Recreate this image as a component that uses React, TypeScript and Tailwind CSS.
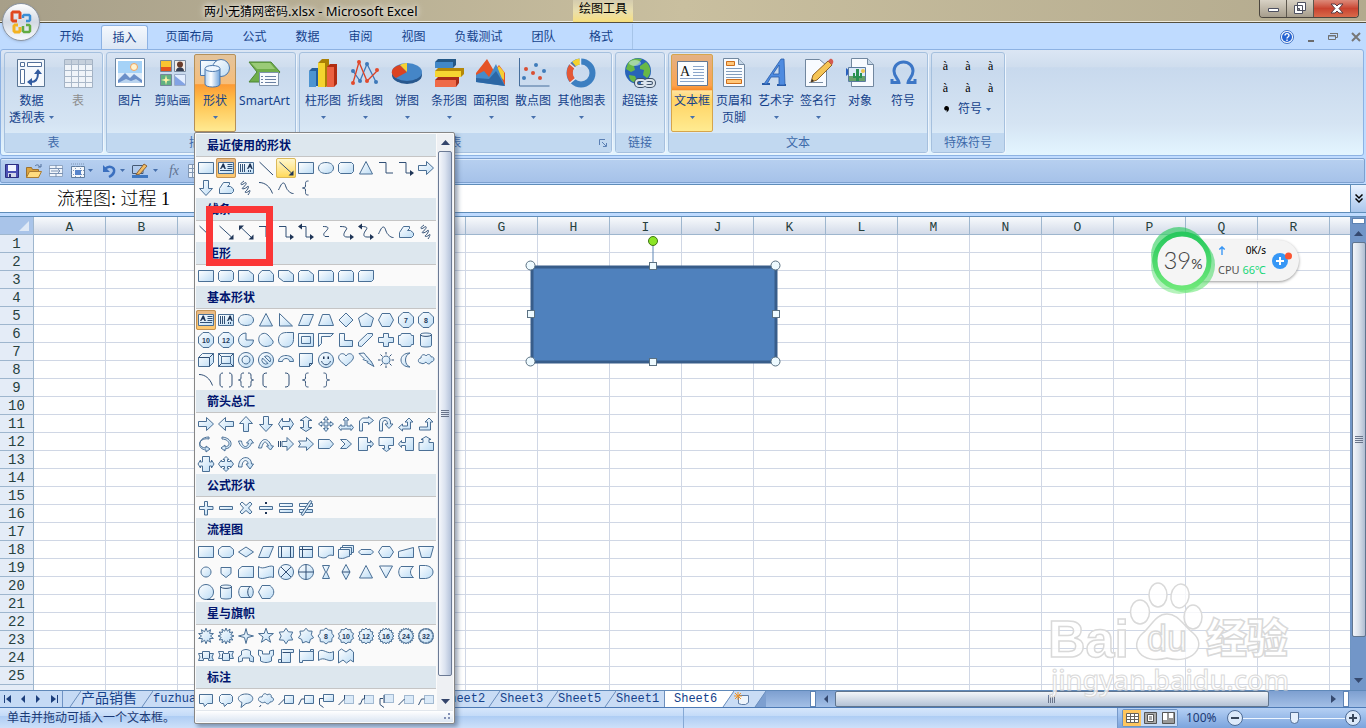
import React from "react";

const UI = "font-['Noto_Sans','Noto_Sans_CJK_SC',sans-serif]";

/* Shape glyphs live on a 20x20 box. Prefixes: "~" open line, "!" solid, ":" dotted, "#" number. */
type Glyph = string[];

const rect = "M2.5 4.5h15v11h-15z";
const rounded = "M4.5 4.5h11l2 2v7l-2 2h-11l-2-2v-7z";
const oval = "M10 4.5c4.8 0 7.5 2.5 7.5 5.5s-2.7 5.5-7.5 5.5-7.5-2.5-7.5-5.5 2.7-5.5 7.5-5.5z";
const disc = "M10 2.5a7.5 7.5 0 1 0 .01 0z";
const textBox = [rect, "~M11.500 6.500h5M11.500 8.500h5M11.500 10.500h5M4 12.500h12", "!M4 11l2.7-5.5h1.2l2 5.5h-1.6l-.4-1.4h-1.9l-.6 1.4z"];
const textBoxV = [rect, "~M4.500 6v8M6.500 6v8M8.500 6v8M12.500 12v2M14.500 12v2", "!M11 11l2.5-5.5h1.2l2 5.5h-1.4l-.4-1.4h-1.9l-.6 1.4z"];
const rightArrow = "M2.5 7.5h8v-4l7 6.5-7 6.5v-4h-8z";
const downArrow = "M7.5 2.5v8h-4l6.5 7 6.5-7h-4v-8z";
const freeform = ["M3.5 15.5v-5l4-6h6v2l-2 2h3l3 2.5v2.5l-2 2z"];
const scribble = ["~M8 3c-5 3-3 5 0 2.500s3 1-.500 3.500 1 2.500 3.500 0 1.500 2-1 4 1 2 3 0 .500 2-1 4"];
const curve = ["~M2.500 12c2-4 3-7 5-7s2 5 4.500 7.500 3.500 3 5.500 3"];
const arc = ["~M3 4.500c6 0 11 4 13.500 11"];
const triangle = "M10 3.500l6.500 12.500h-13z";
const pentagon = "M10 3l7.5 5-2.500 8.500h-10l-2.500-8.500z";
const hexagon = "M6 3.500h8l3.500 6.500-3.500 6.500h-8l-3.500-6.500z";
const octagon = "M7 2.500h6l4.500 4.500v6l-4.500 4.500h-6l-4.500-4.500v-6z";
const can = ["M4.500 4.500c0-2 11-2 11 0v11c0 2-11 2-11 0z", "~M4.500 4.500c0 2.500 11 2.500 11 0"];
const leftBrace = "~M12.500 3c-3 0-3 1-3 3.500s0 3.500-3 3.500c3 0 3 1 3 3.500s0 3.500 3 3.500";
const rightBrace = "~M7.500 3c3 0 3 1 3 3.500s0 3.500 3 3.500c-3 0-3 1-3 3.500s0 3.500-3 3.500";
const bigBrackets = ["~M7 3c-2 0-3 1-3 3v8c0 2 1 3 3 3M13 3c2 0 3 1 3 3v8c0 2-1 3-3 3"];

function starPath(points: number, outer: number, inner: number): string {
  let d = "";
  for (let i = 0; i < points * 2; i++) {
    const r = i % 2 === 0 ? outer : inner;
    const a = (Math.PI * i) / points - Math.PI / 2;
    d += `${i ? "L" : "M"}${(10 + r * Math.cos(a)).toFixed(2)} ${(10 + r * Math.sin(a)).toFixed(2)}`;
  }
  return d + "z";
}

const sections: { title: string; shapes: Glyph[]; active?: number; hover?: number }[] = [
  {
    title: "最近使用的形状",
    active: 1,
    hover: 4,
    shapes: [
      [rect], textBox, textBoxV, ["~M3.500 4l13.500 13"], ["~M3.500 4l12 11", "!M17.500 17.500v-5l-5 5z"], [rect], [oval], [rounded], [triangle],
      ["~M3 4.500h7v10.500h7"], ["~M3 4.500h7v10.500h5", "!M14 12l4 3-4 3z"], [rightArrow],
      [downArrow], freeform, scribble, arc, curve, [leftBrace],
    ],
  },
  {
    title: "线条",
    shapes: [
      ["~M3.500 4l13.500 13"], ["~M3.500 4l12 11", "!M17.500 17.500v-5l-5 5z"], ["~M5 5.500l10 9.500", "!M17.500 17.500v-5l-5 5zM3 3.500v5l5-5z"],
      ["~M3 4.500h7v10.500h7"], ["~M3 4.500h7v10.500h5", "!M14 12l4 3-4 3z"], ["~M5 4.500h5v10.500h5", "!M14 12l4 3-4 3zM6 1.500l-4 3 4 3z"],
      ["~M7 4.500c5 0 6 1 4 3.500s-5 4-2 6.500h4"], ["~M4 4.500c6 0 8 1 6 3.500s-4 7 1 7h4", "!M14 12l4 3-4 3z"], ["~M5 4.500c6 0 7 1 5 3.500s-4 7 1 7h4", "!M14 12l4 3-4 3zM6 1.500l-4 3 4 3z"],
      curve, freeform, scribble,
    ],
  },
  {
    title: "矩形",
    shapes: [
      [rect], [rounded], ["M2.500 4.500h10l5 4v7h-15z"], ["M6 4.500h8l3.500 4v7h-15v-7z"], ["M2.500 4.500h10l5 4v7h-10l-5-4z"],
      ["M4.500 4.500h8l5 4v7h-15v-9z"], ["M2.500 4.500h13l2 2v9h-15z"], ["M4.500 4.500h11l2 2v9h-15v-9z"], ["M4.500 4.500h13v9l-2 2h-13v-9z"],
    ],
  },
  {
    title: "基本形状",
    active: 0,
    shapes: [
      textBox, textBoxV, [oval], [triangle], ["M3.500 3.500l13 12.500h-13z"], ["M7 4.500h10.500l-4.500 11h-10.500z"], ["M6.500 4.500h7l4 11h-15z"],
      ["M10 3l7 7-7 7-7-7z"], [pentagon], [hexagon], [octagon, "#7"], [octagon, "#8"],
      [octagon, "#10"], [octagon, "#12"], ["M10 3a7.500 7 0 1 0 7.500 7h-7.500z"], ["M7 3.500c4-1 6 2.500 10 7.500 1 3-3 5.500-7 5.500-8 0-10-11-3-13z"],
      ["M17.500 2.500v7c0 10-15 10-15 .500 0-5 3-7.500 8-7.500z"], ["M2.500 3.500h15v13h-15z", "M5.500 6.500h9v7h-9z"], ["M2.500 3.500h15l-3 3h-9v7l-3 3z"], ["M3.500 3.500h5v7h8v6h-13z"],
      ["M2.500 16v-4l9-8.500h5v2l-11 11z"], ["M7.500 3.500h5v4h5v5h-5v4h-5v-4h-5v-5h5z"], ["M5.500 3.500h9l1 2h2v9h-2l-1 2h-9l-1-2h-2v-9h2z"], can,
      ["M2.500 7.500l4-4h11v9l-4 4h-11z", "~M2.500 7.500h11v9M13.500 7.500l4-4"], ["M2.500 3.500h15v13h-15z", "M5.500 6.500h9v7h-9z", "~M2.500 3.500l3 3M17.500 16.500l-3-3M17.500 3.500l-3 3M2.500 16.500l3-3"],
      [disc, "M10 6a4 4 0 1 0 .01 0z"], [disc, "M6.500 8a4 4 0 0 0 5.500 5.500zM8.500 6.500a4 4 0 0 1 5.500 5.500z"],
      ["M2.500 11.500c0-8 15-8 15 0h-4c0-4-7-4-7 0z"], ["M3.500 3.500h13v10l-3 3h-10z", "~M16.500 13.500h-3v3"],
      [disc, "!M7 6.500h1.500v2.500h-1.500zM11.500 6.500h1.500v2.500h-1.500z", "~M5.500 11c1.500 5 7.500 5 9 0"], ["M10 6c3-5 9-1 7 3-1 2.500-4 4-7 7-3-3-6-4.500-7-7-2-4 4-8 7-3z"],
      ["M3 3.500l5-.500 3 4 1 .500 2 3 1 .500 3 5.500-7-4 1-1-5-2 1-1z"], ["M10 6a4 4 0 1 0 .01 0z", "~M10 2v2.500M10 15.500v2.500M2 10h2.500M15.500 10h2.500M4.500 4.500l2 2M13.500 13.500l2 2M4.500 15.500l2-2M13.500 6.500l2-2"],
      ["M14 3c-6 2-6 12 0 14-12 0-12-14 0-14z"], ["M5 13c-4 0-3-5 0-5 0-4 4-4 5-2 2-3 5-1 5 1 4-1 4 5 0 5-1 3-4 2-5 0-2 2-4 2-5 1z"],
      arc, bigBrackets, ["~M8 3c-3 0-3 1-3 3.500s0 3.500-2.500 3.500c2.500 0 2.500 1 2.500 3.500s0 3.500 3 3.500M12 3c3 0 3 1 3 3.500s0 3.500 2.500 3.500c-2.500 0-2.500 1-2.500 3.500s0 3.500-3 3.500"],
      ["~M11 3c-3 0-4 1-4 3v8c0 2 1 3 4 3"], ["~M9 3c3 0 4 1 4 3v8c0 2-1 3-4 3"], [leftBrace], [rightBrace],
    ],
  },
  {
    title: "箭头总汇",
    shapes: [
      [rightArrow], ["M17.500 7.500h-8v-4l-7 6.500 7 6.500v-4h8z"], ["M7.500 17.500v-8h-4l6.500-7 6.500 7h-4v8z"], [downArrow],
      ["M2.500 10l4-6v3.500h7v-3.500l4 6-4 6v-3.500h-7v3.500z"], ["M10 2.500l6 4h-3.500v7h3.500l-6 4-6-4h3.500v-7h-3.500z"],
      ["M10 2.500l2.500 3h-1.500v3.500h3.500v-1.500l3 2.500-3 2.500v-1.500h-3.500v3.500h1.500l-2.500 3-2.500-3h1.500v-3.500h-3.500v1.500l-3-2.500 3-2.500v1.500h3.500v-3.500h-1.500z"],
      ["M10 3l3 3h-2v6h4v-1.500l2.500 3-2.500 3v-1.500h-10v1.500l-2.500-3 2.500-3v1.500h4v-6h-2z"],
      ["M3.500 17v-10l3-3h6v-1.500l5 4-5 4v-2h-5l-1 1v7.500z"], ["M3.500 17v-9c0-6 11-6 11 0v2h2.500l-4 4.500-4-4.500h2.500c0-5-5-5-5 0v7z"],
      ["M13 4l4 4h-2.500v7h-8v2l-4-3.500 4-3.500v2h5v-4h-2.500z"], ["M13 4l4 4h-2.500v8h-11v-3h8v-5h-2.500z"],
      ["M13 3c-11 0-12 11-3 11v-2l4 3-4 3v-2c-10-1-8-13 3-11z"], ["M6 3c11 1 12 11 3 12v2l-4-3 4-3v2c7-1 4-8-3-8z"],
      ["M2.500 7c3 10 11 9 13 2h2l-3-4-4 4h2c-1 5-6 5-7-2z"], ["M2.500 14c3-11 9-11 13-2h2l-3 4-4-4h2c-3-6-5-5-7 2z"],
      ["M6 7.500h5v-4l6.500 6.500-6.500 6.500v-4h-5z", "~M2.500 7v6M4.500 7v6"], ["M2.500 7h8v-3.500l7 6.500-7 6.500v-3.500h-8l2-3z"], ["M2.500 5.500h11l4 4.500-4 4.500h-11z"],
      ["M4.500 5.500h6l5 4.500-5 4.500h-6l4.500-4.500z"], ["M2.500 3.500h9v5h3v-2l3 3.500-3 3.500v-2h-3v5h-9z"], ["M3 3.500h14.500v8h-5v3h2l-4 3-4-3h2v-3h-5.500z"],
      ["M17.500 3.500h-8v5h-4v-2l-3 3.500 3 3.500v-2h4v5h8z"], ["M3 8.500h4v-3h-2l5-3 5 3h-2v3h4.500v8h-14.500z"],
      ["M6.500 2.500h7v5.500h2v-2l2.500 4-2.500 4v-2h-2v5.500h-7v-5.500h-2v2l-2.500-4 2.500-4v2h2z"], ["M10 2.500l3 3h-1.500v2h3v-1.500l3 4-3 4v-1.500h-3v2h1.500l-3 3-3-3h1.500v-2h-3v1.500l-3-4 3-4v1.500h3v-2h-1.500z"],
      ["M2.500 13c0-12 13-12 13-3h2l-3.500 5-4-5h2c0-5-6-5-6 3z"],
    ],
  },
  {
    title: "公式形状",
    shapes: [
      ["M8.500 3.500h3v5h5.500v3h-5.500v5.500h-3v-5.500h-5v-3h5z"], ["M3.500 8.500h13v3h-13z"], ["M6 4l4 3.500 4-3.500 2 2-3.500 4 3.500 4-2 2-4-3.500-4 3.500-2-2 3.500-4-3.500-4z"],
      ["M3.500 8.500h13v3h-13z", "!M9 4h2v2h-2zM9 14h2v2h-2z"], ["M3.500 5.500h13v3h-13zM3.500 11.500h13v3h-13z"],
      ["M3.500 5.500h13v3h-13zM3.500 11.500h13v3h-13z", "M14 2.500l2 1-9 14-2-1z"],
    ],
  },
  {
    title: "流程图",
    shapes: [
      [rect], ["M6 4.500h8l3.500 3v5l-3.500 3h-8l-3.500-3v-5z"], ["M10 5l7.500 5-7.500 5-7.500-5z"], ["M7 4.500h10.500l-4.500 11h-10.500z"], [rect, "~M5.500 4.500v11M14.500 4.500v11"], ["M3.500 4.500h13v11h-13z", "~M6.500 4.500v11M3.500 7.500h13"],
      ["M2.500 4.500h15v9c-4-1-5 0-7.500 2-3 1-5 0-7.500-1z"], ["M6.500 3.500h11v7h-11z", "M4.500 5.500h11v7h-11z", "M2.500 7.500h11v7c-4 0-4 3-11 1.500z"], ["M5 7.500h10l2.500 2.500-2.500 2.500h-10l-2.500-2.500z"],
      ["M6 4.500h8l3.500 5.500-3.500 5.500h-8l-3.500-5.500z"], ["M2.500 9.500l15-4v10h-15z"], ["M2.500 4.500h15l-3 11h-9z"],
      ["M10 5a5 5 0 1 0 .01 0z"], ["M5 5.500h10v6l-5 4-5-4z"], ["M6 4.500h11.500v11h-15v-8z"], ["M2.500 4.500c5 4 10-2 15 0v11c-5-2-10 3-15 0z"], [disc, "~M5 5l10 10M15 5l-10 10"], [disc, "~M10 2.500v15M2.500 10h15"],
      ["M6.500 3.500h7l-3 6.500 3 6.500h-7l3-6.500z"], ["M10 2.500l4 7.500-4 7.500-4-7.500z", "~M6 10h8"], [triangle], ["M3.500 4h13l-6.500 12z"], ["M5 4.500h12.500c-4 3-4 8 0 11h-12.500c-3-3-3-8 0-11z"], ["M3.500 3.500h6c10 1 10 12 0 13h-6z"],
      [disc, "~M11 17.500h7v-1"], can, ["M5 4.500h10c3 2 3 9 0 11h-10c-3-2-3-9 0-11z", "~M14 4.500c-3 2-3 9 0 11"], ["M6 3.500h8c5 4 5 9 0 13h-8l-3.500-6.500z"],
    ],
  },
  {
    title: "星与旗帜",
    shapes: [
      [starPath(10, 7.8, 4.5)], [starPath(12, 8, 5)], [starPath(4, 7.5, 2.2)], [starPath(5, 7.8, 3.1)], [starPath(6, 7.8, 4.8)], [starPath(7, 7.8, 5.5)],
      [starPath(8, 8, 6.5), "#8"], [starPath(10, 8, 6.5), "#10"], [starPath(12, 8, 6.4), "#12"], [starPath(16, 8, 6.4), "#16"], [starPath(20, 8, 6.4), "#24"], [starPath(24, 8, 6.4), "#32"],
      ["M2.500 7.500h4v-2h7v2h4l-1.500 3.500 1.500 3.500h-5v-2h-5v2h-5l1.500-3.500z", "~M6.500 7.500v5M13.500 7.500v5"], ["M2.500 5.500h5v2h5v-2h5l-1.500 3.500 1.500 3.500h-4v2h-7v-2h-4l1.500-3.500z", "~M6.500 7.500v5M13.500 7.500v5"],
      ["M5.500 5c3-2 6-2 9 0v4l3 2v5l-4-1v-3h-7v3l-4 1v-5l3-2z"], ["M2.500 4l4 1v3h7v-3l4-1v5l-2 2v4c-4 2-7 2-11 0v-4l-2-2z"],
      ["M6.500 3.500h11v3h-3v10h-12v-3h3v-10z", "~M6.500 6.500h8M5.500 13.500v3"], ["M3.500 3.500v13h3v-2h11v-11h-3v2h-11zM14.500 5.500h3"],
      ["M2.500 5.500c5-4 9 4 15 0v8c-5 4-9-4-15 1z"], ["M2.500 5l3-2 4.500 3 4-3 3.500 3v10l-3-2-4 3-3.500-3-4.500 3z"],
    ],
  },
  {
    title: "标注",
    shapes: [
      ["M3.500 4.500h13v9h-5l-3 3-1-3h-4z"], ["M5.500 4.500h9l2 2v5l-2 2h-3l-3 3-1-3h-2l-2-2v-5z"], ["M10 4c9 0 9 9 0 9.500l-5 4 1-5c-7-3-3-8.500 4-8.500z"], ["M5 12c-4-1-3-6 1-5 1-4 4-4 5-2 3-2 5 0 4 2 4 1 3 5-1 5-1 3-4 2-5 0-2 1-3 1-4 0z", "~M5 15l-1.500 2"],
      ["M8.500 5.500h9v8h-9z", "~M2.500 15l6-6"], ["M8.500 5.500h9v8h-9z", "~M2.500 15l3-6h3"], ["M7.500 4.500h10v7h-10z", "~M7.500 8.500h-4v6l4 3"], [":M8.500 5.500h9v8h-9z", "~M2.500 15l6-6v-4"],
      [":M8.500 5.500h9v8h-9z", "~M2.500 14h2l2-5h2v-4"], [":M8.500 4.500h9v8h-9z", "~M8 5v8M7 8.500h-3v6l4 3"], [":M8.500 5.500h9v8h-9z", "~M2.500 15l6-6"], [":M8.500 5.500h9v8h-9z", "~M2.500 15l3-6h3"],
    ],
  },
];

function ShapeGlyph({ parts }: { parts: Glyph }) {
  return (
    <svg viewBox="0 0 20 20" className="h-5 w-5" aria-hidden="true">
      {parts.map((p, i) => {
        const kind = p[0];
        const d = p.slice(1);
        if (kind === "#")
          return (
            <text key={i} x="10" y="12.500" textAnchor="middle" fontSize="7" fontWeight="700" fill="#1e3a5c" fontFamily="Liberation Sans, sans-serif">
              {d}
            </text>
          );
        if (kind === "~") return <path key={i} d={d} fill="none" stroke="#304f75" />;
        if (kind === "!") return <path key={i} d={d} fill="#1f3557" />;
        if (kind === ":") return <path key={i} d={d} fill="#dbeaf8" stroke="#5b80a8" strokeDasharray="1 1" />;
        return <path key={i} d={p} fill="url(#shapeFill)" stroke="#4a6f95" />;
      })}
    </svg>
  );
}

function Caret({ className = "" }: { className?: string }) {
  return (
    <svg viewBox="0 0 5 3" className={`h-[3px] w-[5px] shrink-0 ${className}`} aria-hidden="true">
      <path d="M0 0h5L2.500 3z" fill="#4670ad" />
    </svg>
  );
}

function ShapeMenu() {
  return (
    <div role="menu" aria-label="形状" className="absolute top-full left-0 z-30 -mt-px flex w-[261px] flex-col rounded-[2px] border border-[#868686] bg-[#fafafa] p-px text-left shadow-[3px_3px_4px_rgba(60,80,110,0.5)]">
      <div className="flex">
        <div className="w-[240px]">
          {sections.map((s) => (
            <section key={s.title}>
              <h3 className="mb-px h-[23px] border-b border-[#c5c5c5] bg-[#dde7ee] pt-px pl-[11px] text-xs leading-[22px] font-bold text-[#00156e]">{s.title}</h3>
              <div className="grid grid-cols-12">
                {s.shapes.map((parts, i) => (
                  <button
                    key={i}
                    aria-label={`${s.title} ${i + 1}`}
                    className={
                      i === s.active
                        ? "h-5 w-5 rounded-[2px] bg-gradient-to-b from-[#e8b987] to-[#ffc96c] outline -outline-offset-1 outline-[#c29254]"
                        : i === s.hover
                          ? "h-5 w-5 rounded-[2px] bg-gradient-to-b from-[#fff8d0] to-[#ffd84e] outline -outline-offset-1 outline-[#dbb95a]"
                          : "h-5 w-5"
                    }
                  >
                    <ShapeGlyph parts={parts} />
                  </button>
                ))}
              </div>
            </section>
          ))}
        </div>
        <div className="ml-px flex w-4 flex-col items-center bg-[#eef0f3]">
          <svg viewBox="0 0 16 17" className="h-[17px] w-4"><path d="M4 11l4.500-5 4.500 5z" fill="#34456b" /></svg>
          <div className="flex w-[14px] flex-1 items-center justify-center rounded-[2px] border border-[#6b7a95] bg-gradient-to-r from-[#f5f7fb] via-[#dbe3f0] to-[#b4c2da]">
            <svg viewBox="0 0 8 8" className="h-2 w-2"><path d="M0 .500h8M0 2.500h8M0 4.500h8M0 6.500h8" stroke="#69748a" /></svg>
          </div>
          <svg viewBox="0 0 16 34" className="h-[34px] w-4"><path d="M4 23h9l-4.500 5z" fill="#34456b" /></svg>
        </div>
      </div>
      <div className="flex h-3 items-end justify-end border-t border-[#e2e7ed] bg-gradient-to-b from-white to-[#dbe5f2] p-[2px]">
        <svg viewBox="0 0 8 8" className="h-2 w-2"><path d="M5 1h2v2h-2zM5 5h2v2h-2zM1 5h2v2h-2z" fill="#8391b5" /></svg>
      </div>
      <div className="pointer-events-none absolute top-[73px] left-[11px] h-[60px] w-[67px] border-[7px] border-[#fb3636]" />
    </div>
  );
}

const icons: Record<string, React.ReactNode> = {
  pivot: (<>
    <path d="M2.500 2.500h27v27h-27z" fill="#f4f8fd" stroke="#5b7695" /><path d="M5.500 5.500h4v4h-4zM12.500 5.500h14v4h-14zM5.500 12.500h4v14h-4z" fill="#fff" stroke="#53709a" />
    <path d="M16 25c5 0 7-4 7-9" fill="none" stroke="#315ba0" strokeWidth="2" /><path d="M23 12l-4 5h8zM12 25l5-4v8z" fill="#315ba0" /></>),
  table: (<>
    <path d="M2.500 2.500h28v28h-28z" fill="#f0f4f9" stroke="#a3b2c4" /><path d="M3 3h27v4H3z" fill="#c6d0dc" /><path d="M2.500 7.500h28M2.500 13.500h28M2.500 19.500h28M2.500 25.500h28M9.500 3v27M16.500 3v27M23.500 3v27" stroke="#aab8c9" /></>),
  picture: (<>
    <path d="M1.500 1.500h29v28h-29z" fill="#fff" stroke="#6d87a3" /><path d="M4 4h24v22H4z" fill="#a5d2f7" /><path d="M4 16h24v10H4z" fill="#dcebfa" /><circle cx="20" cy="10" r="3.500" fill="#fff3cf" stroke="#f1a35e" />
    <path d="M4 23l7-7 5 5 4-4 8 6v3H4z" fill="#6a8fc9" /><path d="M4 26l8-4 5 2 5-2 6 4z" fill="#b9d3ee" /></>),
  clip: (<>
    <path d="M4.500 3.500h11v11h-11z" fill="#f9c331" stroke="#75869b" /><path d="M5 10h10v4H5z" fill="#e2521e" /><path d="M18.500 3.500h11v11h-11z" fill="#f3ece7" stroke="#75869b" /><circle cx="24" cy="7.500" r="3" fill="#6a3c2b" /><path d="M20 14c0-5 8-5 8 0z" fill="#343c51" />
    <path d="M4.500 17.500h11v11h-11z" fill="#62b181" stroke="#75869b" /><path d="M10 18l1 4 4 1-4 1-1 4-1-4-4-1 4-1z" fill="#fff3a5" /><path d="M18.500 17.500h11v11h-11z" fill="#e3eeff" stroke="#9aabc8" /><path d="M19 19l10 8v1H19z" fill="#83a3e4" /></>),
  shapes: (<>
    <path d="M1.500 3.500h18v15h-18z" fill="url(#shapeFill)" stroke="#4b77ab" /><circle cx="22" cy="11" r="8.500" fill="url(#shapeFill)" stroke="#4b77ab" />
    <path d="M6 12v15c0 4 15 4 15 0V12" fill="url(#tube)" stroke="#4b77ab" /><ellipse cx="13.500" cy="11.500" rx="7.500" ry="3" fill="#edf6ff" stroke="#4b77ab" /></>),
  smart: (<>
    <path d="M1 5h22l9 10-9 10H1l8-10z" fill="#6fad4a" stroke="#4d8535" /><path d="M3 6h19l5 6H9z" fill="#9acb77" /><path d="M11.500 15.500h19v13h-19z" fill="#f7fafd" stroke="#7e93ab" /><path d="M17 19.500h11M17 22.500h11M17 25.500h11M13 19.500h2M13 22.500h2M13 25.500h2" stroke="#6980a2" /></>),
  column: (<>
    <path d="M2 14l3-3h7v18H2z" fill="#265f9e" /><path d="M2 14h7v16H2z" fill="#4d94d1" /><path d="M11 6l4-4h7v26l-3 2h-8z" fill="#aa8005" /><path d="M11 6h7v24h-7z" fill="#f4d42e" /><path d="M20 10l3-3h7v20l-3 3h-7z" fill="#b12d12" /><path d="M20 10h7v20h-7z" fill="#ec6141" /></>),
  line: (<>
    <path d="M4 14l7 10 7-17 9 18" fill="none" stroke="#3d78b9" strokeWidth="1.300" /><path d="M4 26L10 5l8 19 11-11" fill="none" stroke="#dc4124" strokeWidth="1.300" />
    <g fill="#3d78b9"><circle cx="4" cy="14" r="2" /><circle cx="11" cy="24" r="2" /><circle cx="18" cy="7" r="2" /><circle cx="27" cy="25" r="2" /></g><g fill="#e24a2c"><circle cx="4" cy="26" r="2" /><circle cx="10" cy="5" r="2" /><circle cx="18" cy="24" r="2" /><circle cx="28" cy="13" r="2" /></g></>),
  pie: (<>
    <ellipse cx="16" cy="18" rx="15" ry="9" fill="#28588e" /><ellipse cx="16" cy="15" rx="15" ry="9" fill="#4586c7" /><path d="M16 15L5 21c-7-4-5-11 4-13z" fill="#db4321" /><path d="M16 15L9 8c2-1 4-2 7-2z" fill="#f5d234" /></>),
  bar: (<>
    <path d="M2 5l3-3h18v6l-3 3H2z" fill="#245887" /><path d="M2 5h18v6H2z" fill="#4288c8" /><path d="M2 14l3-3h26v6l-3 3H2z" fill="#b58808" /><path d="M2 14h26v6H2z" fill="#f5d631" /><path d="M2 23l3-3h21v6l-3 4H2z" fill="#a72d18" /><path d="M2 23h21v7H2z" fill="#ef6a48" /></>),
  area: (<>
    <path d="M1 16L12 2l7 12 5-6 6 8v12L1 20z" fill="#e55326" /><path d="M19 15l5-6 5 6v8z" fill="#f5cf33" /><path d="M1 18l8-4 5 6 7-13 9 22-29-4z" fill="#458bca" /><path d="M1 21l13 1 7-8 9 15-29-4z" fill="#2c67a5" /></>),
  scatter: (<>
    <path d="M2.500 1v28h30" fill="none" stroke="#466e9c" /><g fill="#d94f32"><circle cx="9" cy="12" r="2" /><circle cx="16" cy="16" r="2" /><circle cx="23" cy="21" r="2" /></g><g fill="#3f7cba"><circle cx="7" cy="21" r="2" /><circle cx="19" cy="8" r="2" /><circle cx="27" cy="14" r="2" /></g></>),
  donut: (<>
    <circle cx="16" cy="16" r="11.500" fill="none" stroke="#3c7fc1" strokeWidth="6" /><path d="M8 24A11.500 11.500 0 0 1 8 8" fill="none" stroke="#e45836" strokeWidth="6" /><path d="M9 7a11.500 11.500 0 0 1 6-2.500" fill="none" stroke="#f5d22e" strokeWidth="6" /><path d="M4 6l7 6M15.500 1v9M5 26l6-5" stroke="#dce8f5" strokeWidth="1.500" /></>),
  globe: (<>
    <circle cx="14" cy="14" r="13" fill="#2864b8" /><path d="M4 6c4-5 9-5 14-4l-4 5-4 2 1 4-4 2-5-3zM16 9l6-4c6 5 5 13 1 16l-4-3 1-5-4-1zM5 18l6 1 3 7c-5 0-9-3-9-8z" fill="#68b845" /><ellipse cx="11" cy="6" rx="6" ry="3" fill="#e2f4ff" opacity=".5" />
    <g fill="none" stroke="#3c4f66" strokeWidth="4"><rect x="12" y="23" width="9" height="6" rx="3" /><rect x="21" y="23" width="9" height="6" rx="3" /></g><g fill="none" stroke="#dce5ed" strokeWidth="2"><rect x="12" y="23" width="9" height="6" rx="3" /><rect x="21" y="23" width="9" height="6" rx="3" /><path d="M17 26h9" /></g></>),
  textbox: (<>
    <path d="M1.500 4.500h30v24h-30z" fill="#fbfdff" stroke="#647892" /><path d="M17 9.500h11M17 12.500h11M17 15.500h11M17 18.500h11M4 21.500h24M4 24.500h24" stroke="#8aa5ca" /><text x="4" y="18.500" fontFamily="Liberation Serif, serif" fontSize="14" fill="#111">A</text></>),
  header: (<>
    <path d="M5.500 1.500h15l6 6v22h-21z" fill="#f8fbff" stroke="#71879f" /><path d="M20.500 1.500v6h6" fill="#c5d5e6" stroke="#71879f" /><path d="M8.500 4.500h8v4h-8zM8.500 22.500h15v4h-15z" fill="#ffc679" stroke="#cd6d1a" /><path d="M8 11.500h16M8 14.500h16M8 17.500h16M8 20.500h16" stroke="#829cbb" /></>),
  wordart: (<>
    <path d="M2 27h8M17 28h9" stroke="#285ca8" strokeWidth="2" /><path d="M4 27L21 2h3l1 26h-6l0-8h-8l-4 7zM13 17h6V8z" fill="#4e8be0" stroke="#285ca8" strokeWidth=".8" /></>),
  sign: (<>
    <path d="M3.500 2.500h14l7 6v21h-21z" fill="#f8fbff" stroke="#71879f" /><path d="M7 25.500h14" stroke="#7a8da3" /><path d="M11 18L26 4l4 4-15 15-6 2z" fill="#f5c454" stroke="#8d6227" /><path d="M26 4l2-2c2-1 4 2 3 4l-1 2z" fill="#d55a4f" /><path d="M9 25l1-3 2 2z" fill="#302d2d" /></>),
  object: (<>
    <path d="M7.500 1.500h16l6 6v22h-22z" fill="#f7faff" stroke="#71879f" /><path d="M23.500 1.500v6h6" fill="#c5d5e6" stroke="#71879f" /><path d="M2 11l5 4-5 4z" fill="#285fbd" /><path d="M4.500 10.500h17v14h-17z" fill="#dceafa" stroke="#5b7b9f" /><path d="M5 19h16v5H5z" fill="#68a06b" /><path d="M12 12h3v12h-3zM9 16h2v3h5v-3h2v5H9z" fill="#279052" /><circle cx="19" cy="14" r="2" fill="#eec44b" /></>),
  omega: (
    <path d="M5 22v3.500h7c0-3-5-5-5-11.500 0-5 4-9 9.500-9s9.500 4 9.500 9c0 6.500-5 8.500-5 11.500h7v-3.500" fill="none" stroke="#3c76c6" strokeWidth="3" />),
};

function BigButton({ icon, label, second, caret, wide, state, muted }: { icon: string; label: string; second?: string; caret?: boolean; wide?: string; state?: "open" | "on"; muted?: boolean }) {
  const look =
    state === "open"
      ? "rounded-[2px] border-[#b49059] bg-[linear-gradient(#e3c49c_0%,#f7bd79_38%,#fc9b35_39%,#ffc04b_60%,#ffea92_100%)]"
      : state === "on"
        ? "rounded-[2px] border-[#d6a54c] bg-[linear-gradient(#e3b185_0%,#fda34d_40%,#f98a26_46%,#ffe3a0_47%,#ffd465_60%,#ffeb91_100%)]"
        : "border-transparent";
  return (
    <button className={`flex h-[78px] flex-col items-center border text-xs leading-[17px] whitespace-nowrap ${wide ?? "w-[42px]"} ${look} ${muted ? "text-[#8d8d8d]" : "text-[#15428b]"}`}>
      <svg viewBox="0 0 33 33" className="mt-[2px] mb-[2px] h-[33px] w-[33px] shrink-0" aria-hidden="true">{icons[icon]}</svg>
      <span>{label}</span>
      {second ? <span className="flex items-center gap-1">{second}{caret && <Caret />}</span> : caret && <Caret className="mt-[7px]" />}
    </button>
  );
}

function Group({ title, children, launcher }: { title: string; children: React.ReactNode; launcher?: boolean }) {
  return (
    <div className="flex flex-col rounded-[3px] border border-[#a5c0de] shadow-[1px_1px_0_#eef5fd]">
      <div className="flex h-[80px] px-[2px] pt-px">{children}</div>
      <div className="flex h-[19px] items-center rounded-b-[2px] bg-[#c1d8f0] text-xs text-[#3e6aaa]">
        <span className="flex-1 text-center">{title}</span>
        {launcher && (
          <button aria-label="图表对话框" className="mr-1 h-[9px] w-2">
            <svg viewBox="0 0 8 8" className="h-2 w-2"><path d="M.500 6V.500H6M3 3l4 4M7.500 4v3.500H4" fill="none" stroke="#5b80b4" /></svg>
          </button>
        )}
      </div>
    </div>
  );
}

function TitleBar() {
  return (
    <header className="relative flex h-[23px] shrink-0 justify-between border-b border-[#55503f] bg-gradient-to-r from-[#a79f89] via-[#c9bf9f] to-[#b3aa8e] text-black shadow-[inset_0_-1px_0_#efeada]">
      <div className="flex">
        <h1 className="ml-[204px] w-[369px] pt-[3px] text-xs leading-[17px] whitespace-pre [text-shadow:0_0_5px_#fff,0_0_8px_#fff]">两小无猜网密码<span className="text-[13px]">.xlsx - Microsoft Excel</span></h1>
        <div className="h-[22px] w-[60px] bg-gradient-to-b from-[#d4cbae] via-[#e9dfae] to-[#f7df7c] text-center text-xs leading-[17px]">绘图工具</div>
      </div>
      <div className="mr-[7px] flex h-[18px] overflow-hidden rounded-b-[4px] border border-t-0 border-[#4b463e]">
        <button aria-label="最小化" className="w-[27px] border-r border-[#5c574d] bg-gradient-to-b from-[#d8d2c5] to-[#a69d8c]"><svg viewBox="0 0 26 17"><path d="M8.500 8.500h10v3h-10z" fill="#fff" stroke="#4d5060" /></svg></button>
        <button aria-label="还原" className="w-[27px] border-r border-[#5c574d] bg-gradient-to-b from-[#d8d2c5] to-[#a69d8c]"><svg viewBox="0 0 26 17"><path d="M10.500 2.500h8v8h-8zM7.500 5.500h8v8h-8z" fill="#fff" stroke="#4d5060" /><path d="M10.500 8.500h2v2h-2z" fill="#888" stroke="#4d5060" /></svg></button>
        <button aria-label="关闭" className="w-[44px] bg-gradient-to-b from-[#dc8a7a] via-[#c94330] to-[#d9694a]"><svg viewBox="0 0 44 17"><path d="M17 4h4l2 2 2-2h4l-4 4.500 4 4.500h-4l-2-2-2 2h-4l4-4.500z" fill="#fff" stroke="#573b43" /></svg></button>
      </div>
    </header>
  );
}

function RibbonTabs() {
  const tabs = ["开始", "插入", "页面布局", "公式", "数据", "审阅", "视图", "负载测试", "团队", "格式"];
  return (
    <nav className="flex h-[26px] shrink-0 items-end bg-[#bfdbff] pl-[45px] text-xs text-[#15428b]">
      {tabs.map((t) => (
        <button
          key={t}
          className={
            t === "插入"
              ? "mx-[3px] -mb-px h-[25px] w-[47px] rounded-t-[3px] border border-b-0 border-[#8db2e3] bg-gradient-to-b from-[#f4f8fd] to-[#dbe6f4]"
              : t.length === 4
                ? "h-[25px] w-[77px]"
                : t === "格式"
                  ? "h-[25px] w-[63px] border-r border-[#a6c4e8]"
                  : "h-[25px] w-[53px]"
          }
        >
          {t}
        </button>
      ))}
      <div className="ml-auto flex h-[25px] items-center gap-[13px] pr-[5px]">
        <button aria-label="帮助"><svg viewBox="0 0 14 14" className="h-[14px] w-[14px]"><circle cx="7" cy="7" r="6.500" fill="#fff" stroke="#3d70c5" /><circle cx="7" cy="7" r="5" fill="#2563d2" /><path d="M5 5.500c0-2.500 4-2.500 4 0 0 1.500-2 1.500-2 3M7 9.500v1.500" fill="none" stroke="#fff" strokeWidth="1.400" /></svg></button>
        <button aria-label="最小化工作簿"><svg viewBox="0 0 8 10" className="h-[10px] w-2"><path d="M1 8h6v2H1z" fill="#6c6c6c" /></svg></button>
        <button aria-label="还原工作簿"><svg viewBox="0 0 10 10" className="h-[10px] w-[10px]"><path d="M2.500 1.500h7v4h-2M.500 3.500h7v4h-7zM2 1.500h8M0 4h8" fill="none" stroke="#717171" /></svg></button>
        <button aria-label="关闭工作簿"><svg viewBox="0 0 10 10" className="h-[10px] w-[10px]"><path d="M1 1l8 8M9 1L1 9" stroke="#777" strokeWidth="2" /></svg></button>
      </div>
    </nav>
  );
}

function OfficeButton() {
  return (
    <button aria-label="Office 按钮" className="absolute top-[3px] left-[2px] z-20 h-[38px] w-[38px] rounded-full border border-[#8b95a3] bg-gradient-to-b from-white via-[#d3d9e3] to-[#f8fafd] shadow">
      <svg viewBox="0 0 36 36" className="h-9 w-9">
        <g fill="none" strokeWidth="3">
          <path d="M17 15v-6l-1-1h-6l-1 1v7l1 1h4" stroke="#e0481f" />
          <path d="M20 14v-2l1-1h5l1 1v4l-1 1h-3" stroke="#3a8ed5" strokeWidth="2.500" />
          <path d="M17 23v4l-1 1h-4l-1-1v-5l1-1h3" stroke="#f4b321" />
          <path d="M20 22v5l1 1h5l1-1v-5l-1-1h-3" stroke="#62ac42" strokeWidth="2.500" />
        </g>
      </svg>
    </button>
  );
}

function Ribbon() {
  const marks = ["à", "à", "à", "à", "à", "à"];
  return (
    <div className="mr-[2px] mb-[2px] flex shrink-0 gap-[3px] rounded-[3px] border border-[#8db2e3] bg-[linear-gradient(#dbe6f4_0%,#cfddee_16%,#c8d9ed_17%,#d5e4f3_70%,#e3f5ff_100%)] py-[2px] pl-[3px]">
      <Group title="表">
        <BigButton icon="pivot" label="数据" second="透视表" caret wide="w-[49px]" />
        <BigButton icon="table" label="表" muted wide="w-[44px]" />
      </Group>
      <Group title="插图">
        <BigButton icon="picture" label="图片" />
        <BigButton icon="clip" label="剪贴画" wide="w-[43px]" />
        <div className="relative">
          <BigButton icon="shapes" label="形状" caret state="open" />
          <ShapeMenu />
        </div>
        <BigButton icon="smart" label="SmartArt" wide="w-[57px]" />
      </Group>
      <Group title="图表" launcher>
        <BigButton icon="column" label="柱形图" caret />
        <BigButton icon="line" label="折线图" caret />
        <BigButton icon="pie" label="饼图" caret />
        <BigButton icon="bar" label="条形图" caret />
        <BigButton icon="area" label="面积图" caret />
        <BigButton icon="scatter" label="散点图" caret />
        <BigButton icon="donut" label="其他图表" caret wide="w-[55px]" />
      </Group>
      <Group title="链接">
        <BigButton icon="globe" label="超链接" wide="w-[44px]" />
      </Group>
      <Group title="文本">
        <BigButton icon="textbox" label="文本框" caret state="on" />
        <BigButton icon="header" label="页眉和" second="页脚" />
        <BigButton icon="wordart" label="艺术字" caret />
        <BigButton icon="sign" label="签名行" caret />
        <BigButton icon="object" label="对象" />
        <BigButton icon="omega" label="符号" wide="w-[44px]" />
      </Group>
      <Group title="特殊符号">
        <div className="w-[68px] pt-px">
          <div className="grid grid-cols-3 font-['Liberation_Serif',serif] text-xs text-black">
            {marks.map((m, i) => (
              <button key={i} className="h-[22px]">{m}</button>
            ))}
          </div>
          <button className="flex h-5 w-full items-center gap-1 pl-[8px] text-xs text-[#15428b]">
            <svg viewBox="0 0 9 10" className="mr-[3px] h-[10px] w-[9px]"><path d="M4 2a2.500 2.500 0 0 1 3 2.500c0 2-1 3-3 4 1-1 1-1.500 1-2-3 .500-4-3-1-4.500z" fill="#000" /></svg>符号<Caret />
          </button>
        </div>
      </Group>
    </div>
  );
}

function QuickAccess() {
  const box = "h-4 w-4";
  return (
    <div className="mr-px flex h-[25px] shrink-0 items-center rounded-[2px] border border-[#7ea1cf] bg-gradient-to-b from-[#b7d0f0] to-[#a6c2e9] pl-[3px] shadow-[inset_0_1px_0_#dceafb]">
      <button aria-label="保存" className="mr-[6px]"><svg viewBox="0 0 16 16" className={box}><path d="M1.500 1.500h13v13h-13z" fill="#4b50b5" stroke="#2b2f80" /><path d="M4 2h8v6H4z" fill="#f1f5ff" /><path d="M4 10h8v4H4z" fill="#d3d7e9" /><path d="M5 11h2v3H5z" fill="#31367c" /></svg></button>
      <button aria-label="打开" className="mr-[6px]"><svg viewBox="0 0 16 16" className={box}><path d="M.500 14.500v-10h5l1 2h6v8z" fill="#dda43e" stroke="#9b7130" /><path d="M.500 14.500l3-6h12l-3 6z" fill="#ffdc80" stroke="#ab7d33" /><path d="M9 3c2-2 4-1 5 1m1-3v3h-3" fill="none" stroke="#53709b" /></svg></button>
      <button aria-label="合并后居中" className="mr-[6px]"><svg viewBox="0 0 16 16" className={box}><path d="M1.500 2.500h13v11h-13z" fill="#eff4fb" stroke="#91a6c2" /><path d="M1 5.500h14M1 10.500h14M8 2v3M8 11v3M3 8h9M10 6l2 2-2 2" fill="none" stroke="#7b92b3" /></svg></button>
      <button aria-label="选择对象" className="mr-2 flex items-center gap-[2px]"><svg viewBox="0 0 16 16" className={box}><path d="M1.500 3.500h13v11h-13z" fill="#f4f7fb" stroke="#5f7c9f" /><path d="M1 7.500h14M1 11.500h14M5.500 3v11M10.500 3v11M1 1h14" stroke="#7c94b2" strokeDasharray="1 1" /><path d="M5 7h6v5H5z" fill="#5684cb" /></svg><Caret /></button>
      <button aria-label="撤消" className="mr-[7px] flex items-center gap-[3px]"><svg viewBox="0 0 16 16" className={box}><path d="M4 6c4-4 10-2 9 3-1 3-3 4-5 5" fill="none" stroke="#3b70bf" strokeWidth="2.500" /><path d="M2 2v7h7z" fill="#3b70bf" /></svg><Caret /></button>
      <button aria-label="形状轮廓" className="mr-2 flex items-center gap-[5px]"><svg viewBox="0 0 16 16" className={box}><path d="M1 2.500h10v8H.500v-8" fill="none" stroke="#435874" /><path d="M5 10l7-9 3 2-7 8-4 1z" fill="#f1bc64" stroke="#8a6238" /><path d="M0 12h16v3H0z" fill="#3f77c0" /></svg><Caret /></button>
      <button aria-label="插入函数" className="mr-[6px] w-4 font-['Liberation_Serif',serif] text-sm leading-4 text-[#5f7391] italic">fx</button>
      <button aria-label="表格"><svg viewBox="0 0 16 16" className={box}><path d="M.500 1.500h15v13H.500zM0 5.500h16M0 9.500h16M4.500 1v13M9.500 1v13" fill="#edf3fa" stroke="#8197b4" /></svg></button>
    </div>
  );
}

function FormulaBar() {
  return (
    <div className="mt-px flex h-[29px] shrink-0 border-y border-[#5f8db9] bg-white">
      <input aria-label="名称框" readOnly value="流程图: 过程 1" className="w-[220px] pl-[57px] font-['Liberation_Serif','Noto_Sans_CJK_SC',serif] text-lg leading-6 font-light text-black outline-none" />
      <input aria-label="编辑栏" className="min-w-0 flex-1 outline-none" />
      <button aria-label="展开编辑栏" className="flex w-4 items-center justify-center border-l border-[#5f8db9] bg-gradient-to-b from-[#eaf3ff] to-[#a9c6ec]">
        <svg viewBox="0 0 8 9" className="h-[9px] w-2"><path d="M.500.500L4 4 7.500.500M.500 4.500L4 8l3.500-3.500" fill="none" stroke="#000" strokeWidth="1.500" /></svg>
      </button>
    </div>
  );
}

const columns = "ABCDEFGHIJKLMNOPQR ".split("");
const rows = Array.from({ length: 26 }, (_, i) => i + 1);

function Grid() {
  return (
    <table className="w-[1402px] table-fixed border-separate border-spacing-0 font-['Liberation_Mono',monospace] text-[13px] leading-none text-[#27413e]">
      <thead>
        <tr className="h-[18px]">
          <th aria-label="全选" className="w-[34px] border-r border-b border-[#9eb6ce] bg-[#a9c4e9] p-0">
            <svg viewBox="0 0 33 17" className="h-[17px] w-[33px]"><path d="M29 4v10H19z" fill="#dfe9f6" /></svg>
          </th>
          {columns.map((c) => (
            <th key={c} className="h-[18px] w-[72px] border-r border-b border-[#9eb6ce] bg-gradient-to-b from-[#f8fafc] to-[#d3dbe9] p-0 pt-[3px] font-normal">{c}</th>
          ))}
        </tr>
      </thead>
      <tbody>
        {rows.map((r) => (
          <tr key={r} className="h-[18px]">
            <th className="h-[18px] border-r border-b border-[#9eb6ce] bg-[#e4ecf7] p-0 pt-[2px] text-sm leading-[15px] font-normal">{r < 26 ? r : ""}</th>
            {columns.map((c) => (
              <td key={c} className="border-r border-b border-[#d0d7e5] p-0" />
            ))}
          </tr>
        ))}
      </tbody>
    </table>
  );
}

function DrawnShape() {
  const corners = [[6, 29], [251, 29], [6, 125], [251, 125]];
  const mids = [[128, 29], [6, 77], [251, 77], [128, 125]];
  return (
    <svg viewBox="0 0 258 132" className="absolute top-[19px] left-[524px] h-[132px] w-[258px]" role="img" aria-label="流程图: 过程 1">
      <path d="M129 8v21" stroke="#5e86b5" />
      <rect x="8" y="31" width="244" height="95" fill="#4f81bd" stroke="#385d8a" strokeWidth="3" />
      {corners.map(([x, y]) => <circle key={`${x}-${y}`} cx={x + 0.5} cy={y + 0.5} r="4.500" fill="#eefaff" stroke="#5b7182" />)}
      {mids.map(([x, y]) => <rect key={`${x}-${y}`} x={x - 2.5} y={y - 2.5} width="7" height="7" fill="#eefaff" stroke="#5b7182" />)}
      <circle cx="129" cy="5" r="4.500" fill="#8be526" stroke="#3f7517" />
    </svg>
  );
}

function Watermark() {
  return (
    <svg viewBox="0 0 250 122" className="absolute right-[70px] bottom-[-10px] z-10 h-[122px] w-[250px]" fill="#fff" fillOpacity=".8" stroke="#d9d9d9" strokeWidth="1.500">
      <ellipse cx="94" cy="34" rx="9.500" ry="12" /><ellipse cx="112" cy="17" rx="9" ry="12" /><ellipse cx="134" cy="18" rx="9" ry="12" transform="rotate(10 134 18)" /><ellipse cx="147" cy="39" rx="9" ry="12" />
      <path d="M121 36c-11 0-15 11-24 19-15 13-2 32 24 25 25 7 41-12 26-25-10-8-15-19-26-19z" />
      <g fontFamily="Liberation Sans, Arial, sans-serif" fontWeight="700"><text x="2" y="79" fontSize="52">Bai</text><text x="101" y="73" fontSize="36" fontWeight="400">du</text></g>
      <text x="160" y="75" fontFamily="Noto Sans CJK SC, sans-serif" fontSize="41" fontWeight="900">经验</text>
      <text x="5" y="112" fontFamily="Noto Sans, sans-serif" fontSize="27" fontWeight="500" strokeWidth="1">jingyan.baidu.com</text>
    </svg>
  );
}

function Monitor() {
  return (
    <aside className="absolute top-[9px] right-[67px] z-10 flex items-center font-['Noto_Sans','Noto_Sans_CJK_SC',sans-serif]">
      <div className="relative z-10 flex h-[68px] w-[66px] items-center justify-center">
        <svg viewBox="0 0 66 68" className="absolute inset-0 h-[68px] w-[66px]">
          <defs><linearGradient id="ring" x2="0" y2="1"><stop stopColor="#27c85d" /><stop offset="1" stopColor="#6ee879" /></linearGradient></defs>
          <circle cx="29" cy="29" r="28" fill="url(#ring)" opacity=".65" /><circle cx="37" cy="39" r="28" fill="url(#ring)" opacity=".6" /><circle cx="29" cy="40" r="28" fill="url(#ring)" opacity=".5" />
          <circle cx="32" cy="35" r="27" fill="#f5f5f5" stroke="url(#ring)" strokeWidth="5" />
        </svg>
        <p className="relative font-['Lato',sans-serif] text-2xl font-light text-[#444]">39<span className="text-sm font-normal">%</span></p>
      </div>
      <div className="-ml-5 flex h-[41px] w-[103px] items-center rounded-r-full bg-[#f4f4f4] pr-2 pl-[22px] shadow-[0_1px_3px_#999]">
        <div className="flex-1 text-[11px] leading-[19px]">
          <p className="flex justify-between text-[10px] text-black"><svg viewBox="0 0 8 10" className="mt-[5px] h-[9px] w-2"><path d="M4 10V1M1 4l3-3 3 3" fill="none" stroke="#3695f5" strokeWidth="1.500" /></svg>0K/s</p>
          <p className="whitespace-nowrap text-[#555]">CPU <span className="text-[#17d778]">66℃</span></p>
        </div>
        <svg viewBox="0 0 20 18" className="ml-[6px] h-[18px] w-5 shrink-0"><circle cx="8" cy="10" r="8" fill="#3697f6" /><path d="M8 6v8M4 10h8" stroke="#fff" strokeWidth="2" /><circle cx="16.500" cy="5" r="3.500" fill="#fb5532" /></svg>
      </div>
    </aside>
  );
}

function VerticalScroll() {
  return (
    <div className="flex w-4 shrink-0 flex-col items-center border-l border-[#6f95c4] bg-[#7296c8]">
      <div className="mt-px h-[6px] w-[13px] border border-[#5c82b2] bg-white" />
      <svg viewBox="0 0 15 18" className="h-[18px] w-[15px]"><path d="M3 12l4.500-5 4.500 5z" fill="#35496f" /></svg>
      <div className="flex w-[14px] flex-1 items-center justify-center rounded-[2px] border border-[#60758f] bg-gradient-to-r from-[#f3f5f9] via-[#d9e0ea] to-[#afbdd2]">
        <svg viewBox="0 0 8 8" className="h-2 w-2"><path d="M0 .500h8M0 2.500h8M0 4.500h8M0 6.500h8" stroke="#69748a" /></svg>
      </div>
      <svg viewBox="0 0 15 53" className="h-[53px] w-[15px]"><path d="M3 41h9l-4.500 5z" fill="#35496f" /></svg>
    </div>
  );
}

function Slant({ left, right }: { left: string; right: string }) {
  return (
    <svg viewBox="0 0 12 16" className="h-4 w-3 shrink-0" aria-hidden="true">
      <path d="M0 0h12L1 16H0z" fill={left} /><path d="M12 0v16H1z" fill={right} /><path d="M12 0L1 16" stroke="#6c8fbd" />
    </svg>
  );
}

function SheetBar() {
  const tab = "h-4 pb-px text-[#15428b] leading-4 whitespace-nowrap text-left bg-[#c9dcf5]";
  return (
    <div className="flex h-[18px] shrink-0 border-t border-b border-[#6089b9] border-b-[#4d7ab5] bg-gradient-to-b from-[#7d9fd0] to-[#a3bfe6]">
      <div className="flex w-[63px] shrink-0 items-center justify-around border-r border-[#6f93c5] bg-[#c5daf5]">
        {["M1 0h1v8H1zM8 0v8L3 4z", "M6 0v8L2 4z", "M2 0v8l4-4z", "M7 0h1v8H7zM1 0v8l5-4z"].map((d, i) => (
          <button key={i} aria-label={["第一张", "上一张", "下一张", "最后一张"][i]}><svg viewBox="0 0 9 8" className="h-2 w-[9px]"><path d={d} fill="#1d3f7c" /></svg></button>
        ))}
      </div>
      <div className="flex font-['Liberation_Mono','Noto_Sans_CJK_SC',monospace] text-xs">
        <span className="w-[6px] bg-[#c5daf5]" />
        <Slant left="#c5daf5" right="#c9dcf5" />
        <button className={`${tab} w-[60px] text-sm`}>产品销售</button>
        <Slant left="#c9dcf5" right="#c9dcf5" />
        <button className={`${tab} w-[277px]`}>fuzhua</button>
        <Slant left="#c9dcf5" right="#c9dcf5" />
        <button className={`${tab} w-[46px]`}>Sheet2</button>
        {["Sheet3", "Sheet5"].map((s) => (
          <React.Fragment key={s}>
            <Slant left="#c9dcf5" right="#c9dcf5" />
            <button className={`${tab} w-[46px]`}>{s}</button>
          </React.Fragment>
        ))}
        <Slant left="#c9dcf5" right="#c9dcf5" />
        <button className={`${tab} w-12`}>Sheet1</button>
        <button className="h-4 w-[58px] border-l border-[#6c8fbd] bg-white pl-[9px] text-left leading-4 text-[#15428b]">Sheet6</button>
        <Slant left="#ffffff" right="#c9dcf5" />
        <button aria-label="插入工作表" className="h-4 w-[20px] bg-[#c9dcf5]">
          <svg viewBox="0 0 16 14" className="h-[14px] w-4"><path d="M4.500 3.500h10v7l-3 2h-4l-3-1z" fill="#eef4fb" stroke="#5f7da6" /><path d="M4 0v8M0 4h8M1 1l6 6M7 1L1 7" stroke="#ef9327" /></svg>
        </button>
        <Slant left="#c9dcf5" right="#7d9fd0" />
      </div>
      <div className="flex min-w-0 flex-1 pl-[44px]">
        <span className="h-4 w-[6px] shrink-0 border border-[#5d83b5] bg-white" />
        <svg viewBox="0 0 19 16" className="h-4 w-[19px] shrink-0"><path d="M12 4v8L8 8z" fill="#35496f" /></svg>
        <div className="flex h-4 flex-1 items-center justify-center rounded-[2px] border border-[#60758f] bg-gradient-to-b from-[#f2f5f9] to-[#b4c2d6]">
          <svg viewBox="0 0 8 8" className="h-2 w-2"><path d="M.500 0v8M2.500 0v8M4.500 0v8M6.500 0v8" stroke="#69748a" /></svg>
        </div>
        <svg viewBox="0 0 74 16" className="h-4 w-[74px] shrink-0"><path d="M62 4v8l5-4z" fill="#35496f" /></svg>
        <span className="mr-[17px] h-4 w-[6px] shrink-0 border border-[#5d83b5] bg-white" />
      </div>
    </div>
  );
}

function StatusBar() {
  return (
    <footer className="flex h-5 shrink-0 items-center bg-[linear-gradient(#d6e6fb_0%,#c3daf8_40%,#aecdf4_41%,#cde0f9_100%)] text-xs text-[#1b3a75]">
      <p className="w-1/2 shrink-0 pl-[7px] whitespace-nowrap">单击并拖动可插入一个文本框。</p>
      <div className="h-5 flex-1 border-l border-[#86a9d5]" />
      <div className="flex h-5 w-[249px] shrink-0 items-center border-l border-[#7699ca] bg-gradient-to-b from-[#b5d0f4] to-[#7ba4dd] pl-[4px]">
        <div className="flex h-[18px] rounded-[2px] border border-[#6c92c4]">
          <button aria-label="普通" className="w-[18px] bg-[#ffc65e]"><svg viewBox="0 0 18 16"><path d="M3.500 3.500h12v9h-12zM3 6.500h12M3 9.500h12M7.500 3v9M11.500 3v9" fill="#fff" stroke="#66635d" /></svg></button>
          <button aria-label="页面布局" className="w-[18px] bg-[#c8dbf4]"><svg viewBox="0 0 18 16"><path d="M3.500 2.500h12v11h-12z" fill="#aaa" stroke="#555" /><path d="M6.500 4.500h6v7h-6zM8 7h3M8 9h3" fill="#fff" stroke="#555" /></svg></button>
          <button aria-label="分页预览" className="w-[18px] bg-[#c8dbf4]"><svg viewBox="0 0 18 16"><path d="M3.500 2.500h12v11h-12z" fill="#999" stroke="#555" /><path d="M4 3h4v7H4zM10 3h4v5h-4z" fill="#fff" /></svg></button>
        </div>
        <button className="ml-2 w-[34px] text-left">100%</button>
        <button aria-label="缩小" className="ml-[7px]"><svg viewBox="0 0 16 16" className="h-4 w-4"><circle cx="8" cy="8" r="7.500" fill="#dce9fa" stroke="#4d6b95" /><path d="M4 8h8" stroke="#39475b" strokeWidth="2" /></svg></button>
        <label className="relative flex h-4 flex-1 items-center">
          <input type="range" aria-label="显示比例" defaultValue="50" className="h-px w-full appearance-none bg-[#eef5ff] [&::-webkit-slider-thumb]:h-3 [&::-webkit-slider-thumb]:w-[9px] [&::-webkit-slider-thumb]:appearance-none [&::-webkit-slider-thumb]:rounded-b-full [&::-webkit-slider-thumb]:border [&::-webkit-slider-thumb]:border-[#526f97] [&::-webkit-slider-thumb]:bg-[#e4effc]" />
        </label>
        <button aria-label="放大" className="mr-[5px]"><svg viewBox="0 0 16 16" className="h-4 w-4"><circle cx="8" cy="8" r="7.500" fill="#dce9fa" stroke="#4d6b95" /><path d="M4 8h8M8 4v8" stroke="#39475b" strokeWidth="2" /></svg></button>
      </div>
    </footer>
  );
}

export default function App() {
  return (
    <div className={`relative flex h-screen flex-col overflow-hidden bg-[#bfdbff] ${UI}`}>
      <svg className="absolute h-0 w-0" aria-hidden="true">
        <defs>
          <linearGradient id="shapeFill" x1="0" y1="0" x2="1" y2="1"><stop stopColor="#fff" /><stop offset="1" stopColor="#bcdcf5" /></linearGradient>
          <linearGradient id="tube"><stop stopColor="#b4d3f3" /><stop offset=".4" stopColor="#fff" /><stop offset="1" stopColor="#6fa3dc" /></linearGradient>
        </defs>
      </svg>
      <TitleBar />
      <OfficeButton />
      <RibbonTabs />
      <Ribbon />
      <QuickAccess />
      <FormulaBar />
      <main className="relative mt-[3px] flex min-h-0 flex-1 border-t border-[#5f8db9]">
        <div className="relative min-w-0 flex-1 overflow-hidden bg-white">
          <Grid />
          <DrawnShape />
        </div>
        <VerticalScroll />
        <Monitor />
        <Watermark />
      </main>
      <SheetBar />
      <StatusBar />
    </div>
  );
}
